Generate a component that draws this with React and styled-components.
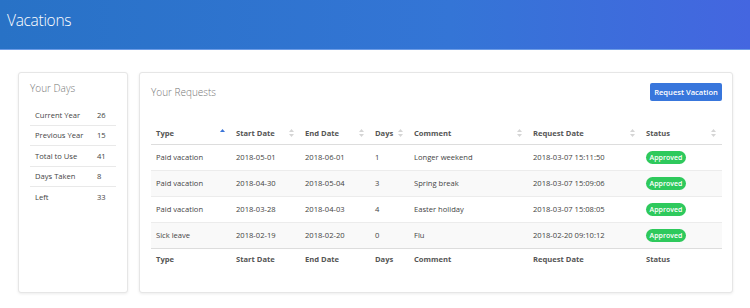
import React from "react";
import styled, { createGlobalStyle } from "styled-components";

const Global = createGlobalStyle`
  html, body { margin: 0; padding: 0; background: #fff; }
  body { font-family: "Open Sans", "Noto Sans", sans-serif; color: #333; }
  * { box-sizing: border-box; }
`;

const Page = styled.div`
  width: 750px;
  height: 308px;
  overflow: hidden;
  background: #fff;
`;

const Header = styled.header`
  height: 50px;
  background: linear-gradient(90deg, #2872c6 0%, #3475d6 60%, #4466e0 100%);
  border-bottom: 1px solid #6d9ce6;
  display: flex;
  align-items: center;
  padding: 0 7px 9px;
`;

const Title = styled.h1`
  margin: 0;
  color: #fff;
  font-weight: 300;
  font-size: 15.5px;
  letter-spacing: -0.3px;
`;

const Main = styled.main`
  display: flex;
  gap: 11px;
  padding: 22px 19px 0 18px;
`;

const Card = styled.section`
  background: #fff;
  border: 1px solid #e6e6e6;
  border-radius: 3px;
  box-shadow: 0 1px 3px rgba(0, 0, 0, 0.08);
  height: 221px;
  width: ${(p) => (p.$width ? p.$width : "auto")};
  flex: ${(p) => (p.$grow ? "1" : "none")};
  padding: ${(p) => p.$pad};
`;

const CardTitle = styled.h2`
  margin: 0;
  font-size: 10px;
  font-weight: 300;
  color: #777;
  line-height: 14px;
`;

const DaysTable = styled.div`
  margin-top: 10px;
  display: flex;
  flex-direction: column;
`;

const DayRow = styled.div`
  display: grid;
  grid-template-columns: 1fr 19px;
  height: 20.5px;
  align-items: center;
  padding-left: 5px;
  font-size: 7.6px;
  color: #444;
  border-bottom: ${(p) => (p.$last ? "none" : "1px solid #e9e9e9")};
`;

const Toolbar = styled.div`
  display: flex;
  justify-content: space-between;
  align-items: center;
  height: 18px;
`;

const Button = styled.button`
  border: none;
  border-radius: 2px;
  background: #3876dc;
  color: #fff;
  font-family: inherit;
  font-size: 7.6px;
  font-weight: 600;
  height: 18px;
  width: 72px;
  padding: 0;
`;

const Table = styled.table`
  margin-top: 22px;
  width: 100%;
  border-collapse: collapse;
  table-layout: fixed;
  font-size: 7.6px;
`;

const Th = styled.th`
  text-align: left;
  font-weight: 700;
  color: #555;
  height: 21px;
  padding: 0 0 0 5px;
  border-bottom: 1px solid #ddd;
  position: relative;
`;

const Tf = styled.td`
  font-weight: 700;
  color: #555;
  height: 22px;
  padding: 0 0 0 5px;
  border-top: 1px solid #ddd;
`;

const Tr = styled.tr`
  background: ${(p) => (p.$striped ? "#f9f9f9" : "#fff")};
`;

const Td = styled.td`
  height: 26px;
  padding: 0 0 0 5px;
  color: #444;
  border-bottom: ${(p) => (p.$last ? "none" : "1px solid #ececec")};
`;

const SortIcon = styled.svg`
  position: absolute;
  right: 6px;
  top: 50%;
  transform: translateY(-50%);
`;

const Badge = styled.span`
  display: inline-flex;
  align-items: center;
  justify-content: center;
  width: 40px;
  height: 13px;
  border-radius: 7px;
  background: #2ec95c;
  color: #fff;
  font-size: 7px;
  font-weight: 600;
`;

function Sort({ active }) {
  return (
    <SortIcon width="5" height="9" viewBox="0 0 5 9">
      <path d="M0 3.5 L2.5 0.5 L5 3.5 Z" fill={active ? "#3a74d8" : "#d5d5d5"} />
      {!active && <path d="M0 5.5 L2.5 8.5 L5 5.5 Z" fill="#d5d5d5" />}
    </SortIcon>
  );
}

const days = [
  ["Current Year", "26"],
  ["Previous Year", "15"],
  ["Total to Use", "41"],
  ["Days Taken", "8"],
  ["Left", "33"],
];

const cols = [
  { label: "Type", w: 80 },
  { label: "Start Date", w: 69 },
  { label: "End Date", w: 70 },
  { label: "Days", w: 39 },
  { label: "Comment", w: 119 },
  { label: "Request Date", w: 113 },
  { label: "Status", w: 81 },
];

const rows = [
  ["Paid vacation", "2018-05-01", "2018-06-01", "1", "Longer weekend", "2018-03-07 15:11:50"],
  ["Paid vacation", "2018-04-30", "2018-05-04", "3", "Spring break", "2018-03-07 15:09:06"],
  ["Paid vacation", "2018-03-28", "2018-04-03", "4", "Easter holiday", "2018-03-07 15:08:05"],
  ["Sick leave", "2018-02-19", "2018-02-20", "0", "Flu", "2018-02-20 09:10:12"],
];

export default function App() {
  return (
    <Page>
      <Global />
      <Header>
        <Title>Vacations</Title>
      </Header>
      <Main>
        <Card $width="110px" $pad="8px 11px">
          <CardTitle>Your Days</CardTitle>
          <DaysTable>
            {days.map(([k, v], i) => (
              <DayRow key={k} $last={i === days.length - 1}>
                <span>{k}</span>
                <span>{v}</span>
              </DayRow>
            ))}
          </DaysTable>
        </Card>
        <Card $grow $pad="10px 10px 0 11px">
          <Toolbar>
            <CardTitle>Your Requests</CardTitle>
            <Button>Request Vacation</Button>
          </Toolbar>
          <Table>
            <colgroup>
              {cols.map((c) => (
                <col key={c.label} style={{ width: c.w }} />
              ))}
            </colgroup>
            <thead>
              <tr>
                {cols.map((c, i) => (
                  <Th key={c.label}>
                    {c.label}
                    <Sort active={i === 0} />
                  </Th>
                ))}
              </tr>
            </thead>
            <tbody>
              {rows.map((r, i) => (
                <Tr key={i} $striped={i % 2 === 1}>
                  {r.map((cell, j) => (
                    <Td key={j} $last={i === rows.length - 1}>
                      {cell}
                    </Td>
                  ))}
                  <Td $last={i === rows.length - 1}>
                    <Badge>Approved</Badge>
                  </Td>
                </Tr>
              ))}
            </tbody>
            <tfoot>
              <tr>
                {cols.map((c) => (
                  <Tf key={c.label}>{c.label}</Tf>
                ))}
              </tr>
            </tfoot>
          </Table>
        </Card>
      </Main>
    </Page>
  );
}
